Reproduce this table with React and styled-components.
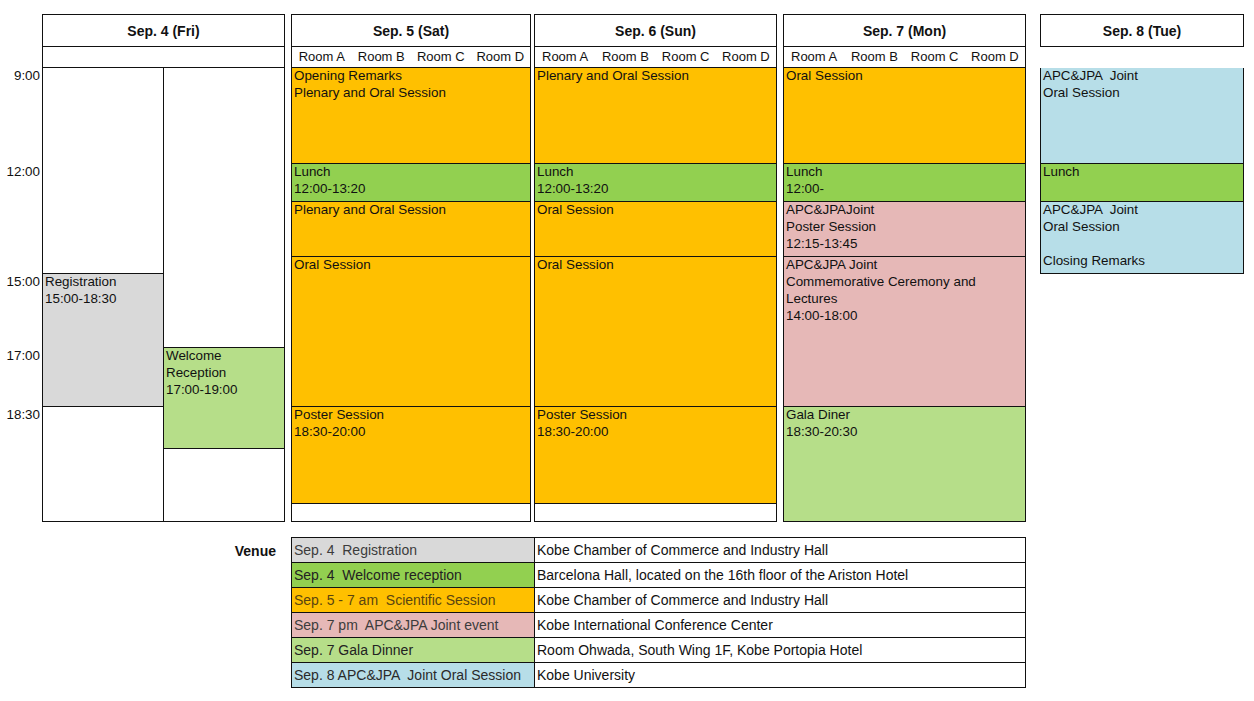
import React from 'react';
import styled, { createGlobalStyle } from 'styled-components';

const Global = createGlobalStyle`
  html, body {
    margin: 0;
    padding: 0;
    background: #fff;
  }
  body {
    font-family: "Liberation Sans", Arial, sans-serif;
    font-size: 13px;
    color: #111;
  }
`;

const ORANGE = '#ffc000';
const LUNCH = '#92d050';
const LIGHT_GREEN = '#b6de89';
const PINK = '#e6b8b7';
const BLUE = '#b7dee8';
const GRAY = '#d9d9d9';

const Page = styled.div`
  padding-top: 14px;
  width: 1254px;
`;

const Schedule = styled.div`
  display: flex;
  align-items: flex-start;
`;

const TimeColumn = styled.div`
  width: 42px;
  padding-top: 53px;
  display: flex;
  flex-direction: column;
`;

const TimeLabel = styled.div`
  height: ${(p) => p.h}px;
  padding-right: 2px;
  text-align: right;
  font-size: 13.4px;
  line-height: 17px;
  box-sizing: border-box;
`;

const Day = styled.div`
  width: ${(p) => p.w}px;
  margin-left: ${(p) => p.gap || 0}px;
  display: flex;
  flex-direction: column;
`;

const DayHeader = styled.div`
  height: 33px;
  box-sizing: border-box;
  border: 1px solid #111;
  display: flex;
  align-items: center;
  justify-content: center;
  font-weight: bold;
  font-size: 14px;
`;

const Rooms = styled.div`
  height: 21px;
  box-sizing: border-box;
  border: 1px solid #111;
  border-top: none;
  border-color: ${(p) => (p.hidden ? 'transparent' : '#111')};
  display: grid;
  grid-template-columns: repeat(4, 1fr);
  align-items: center;
  text-align: center;
  line-height: 20px;
`;

const Body = styled.div`
  display: flex;
  border-left: 1px solid #111;
  border-right: 1px solid #111;
`;

const Track = styled.div`
  flex: 1;
  display: flex;
  flex-direction: column;
  & + & {
    border-left: 1px solid #111;
  }
`;

const Block = styled.div`
  height: ${(p) => p.h}px;
  box-sizing: border-box;
  background: ${(p) => p.bg || '#fff'};
  border-bottom: 1px solid #111;
  padding: 0 2px;
  font-size: 13.4px;
  line-height: 17px;
  white-space: pre-wrap;
  overflow: hidden;
`;

const Text = styled.div`
  margin-top: -1px;
`;

const Venue = styled.div`
  display: flex;
  margin-top: 15px;
  font-size: 14px;
`;

const VenueLabel = styled.div`
  width: 291px;
  box-sizing: border-box;
  padding: 6px 15px 0 0;
  text-align: right;
  font-weight: bold;
`;

const VenueTable = styled.table`
  border-collapse: collapse;
  width: 735px;
  table-layout: fixed;
  font-size: 14px;
`;

const VenueCell = styled.td`
  height: 25px;
  box-sizing: border-box;
  border: 1px solid #111;
  padding: 0 2px;
  background: ${(p) => p.bg || '#fff'};
  color: ${(p) => p.ink || '#111'};
  white-space: pre;
  width: ${(p) => (p.first ? '243px' : 'auto')};
`;

const main = (text) => [
  { h: 96, bg: ORANGE, text },
  { h: 38, bg: LUNCH, text: 'Lunch\n12:00-13:20' },
];

const days = [
  {
    label: 'Sep. 5 (Sat)',
    w: 240,
    gap: 6,
    blocks: [
      ...main('Opening Remarks\nPlenary and Oral Session'),
      { h: 55, bg: ORANGE, text: 'Plenary and Oral Session' },
      { h: 150, bg: ORANGE, text: 'Oral Session' },
      { h: 97, bg: ORANGE, text: 'Poster Session\n18:30-20:00' },
      { h: 18 },
    ],
  },
  {
    label: 'Sep. 6 (Sun)',
    w: 243,
    gap: 3,
    blocks: [
      ...main('Plenary and Oral Session'),
      { h: 55, bg: ORANGE, text: 'Oral Session' },
      { h: 150, bg: ORANGE, text: 'Oral Session' },
      { h: 97, bg: ORANGE, text: 'Poster Session\n18:30-20:00' },
      { h: 18 },
    ],
  },
  {
    label: 'Sep. 7 (Mon)',
    w: 243,
    gap: 6,
    blocks: [
      { h: 96, bg: ORANGE, text: 'Oral Session' },
      { h: 38, bg: LUNCH, text: 'Lunch\n12:00-' },
      { h: 55, bg: PINK, text: 'APC&JPAJoint\nPoster Session\n12:15-13:45' },
      {
        h: 150,
        bg: PINK,
        text: 'APC&JPA Joint\nCommemorative Ceremony and\nLectures\n14:00-18:00',
      },
      { h: 115, bg: LIGHT_GREEN, text: 'Gala Diner\n18:30-20:30' },
    ],
  },
  {
    label: 'Sep. 8 (Tue)',
    w: 204,
    gap: 14,
    noRooms: true,
    blocks: [
      { h: 96, bg: BLUE, text: 'APC&JPA  Joint\nOral Session' },
      { h: 38, bg: LUNCH, text: 'Lunch' },
      { h: 72, bg: BLUE, text: 'APC&JPA  Joint\nOral Session\n\nClosing Remarks' },
    ],
  },
];

const venues = [
  { bg: GRAY, ink: '#3c3c3c', what: 'Sep. 4  Registration', where: 'Kobe Chamber of Commerce and Industry Hall' },
  { bg: LUNCH, ink: '#222', what: 'Sep. 4  Welcome reception', where: 'Barcelona Hall, located on the 16th floor of the Ariston Hotel' },
  { bg: ORANGE, ink: '#5a4510', what: 'Sep. 5 - 7 am  Scientific Session', where: 'Kobe Chamber of Commerce and Industry Hall' },
  { bg: PINK, ink: '#3c3c3c', what: 'Sep. 7 pm  APC&JPA Joint event', where: 'Kobe International Conference Center' },
  { bg: LIGHT_GREEN, ink: '#222', what: 'Sep. 7 Gala Dinner', where: 'Room Ohwada, South Wing 1F, Kobe Portopia Hotel' },
  { bg: BLUE, ink: '#2a2a2a', what: 'Sep. 8 APC&JPA  Joint Oral Session', where: 'Kobe University' },
];

const times = [
  ['9:00', 96],
  ['12:00', 110],
  ['15:00', 74],
  ['17:00', 59],
  ['18:30', 17],
];

const renderBlocks = (blocks) =>
  blocks.map((b, i) => (
    <Block key={i} h={b.h} bg={b.bg}>
      {b.text && <Text>{b.text}</Text>}
    </Block>
  ));

export default function App() {
  return (
    <Page>
      <Global />
      <Schedule>
        <TimeColumn>
          {times.map(([t, h]) => (
            <TimeLabel key={t} h={h}>
              {t}
            </TimeLabel>
          ))}
        </TimeColumn>

        {/* registration day has two tracks and no rooms */}
        <Day w={243}>
          <DayHeader>Sep. 4 (Fri)</DayHeader>
          <Rooms />
          <Body>
            <Track>
              {renderBlocks([
                { h: 206 },
                { h: 133, bg: GRAY, text: 'Registration\n15:00-18:30' },
                { h: 115 },
              ])}
            </Track>
            <Track>
              {renderBlocks([
                { h: 280 },
                { h: 101, bg: LIGHT_GREEN, text: 'Welcome\nReception\n17:00-19:00' },
                { h: 73 },
              ])}
            </Track>
          </Body>
        </Day>

        {days.map((d) => (
          <Day key={d.label} w={d.w} gap={d.gap}>
            <DayHeader>{d.label}</DayHeader>
            <Rooms hidden={d.noRooms}>
              {!d.noRooms &&
                ['Room A', 'Room B', 'Room C', 'Room D'].map((r) => <span key={r}>{r}</span>)}
            </Rooms>
            <Body>
              <Track>{renderBlocks(d.blocks)}</Track>
            </Body>
          </Day>
        ))}
      </Schedule>

      <Venue>
        <VenueLabel>Venue</VenueLabel>
        <VenueTable>
          <tbody>
            {venues.map((v) => (
              <tr key={v.what}>
                <VenueCell first bg={v.bg} ink={v.ink}>
                  {v.what}
                </VenueCell>
                <VenueCell>{v.where}</VenueCell>
              </tr>
            ))}
          </tbody>
        </VenueTable>
      </Venue>
    </Page>
  );
}
